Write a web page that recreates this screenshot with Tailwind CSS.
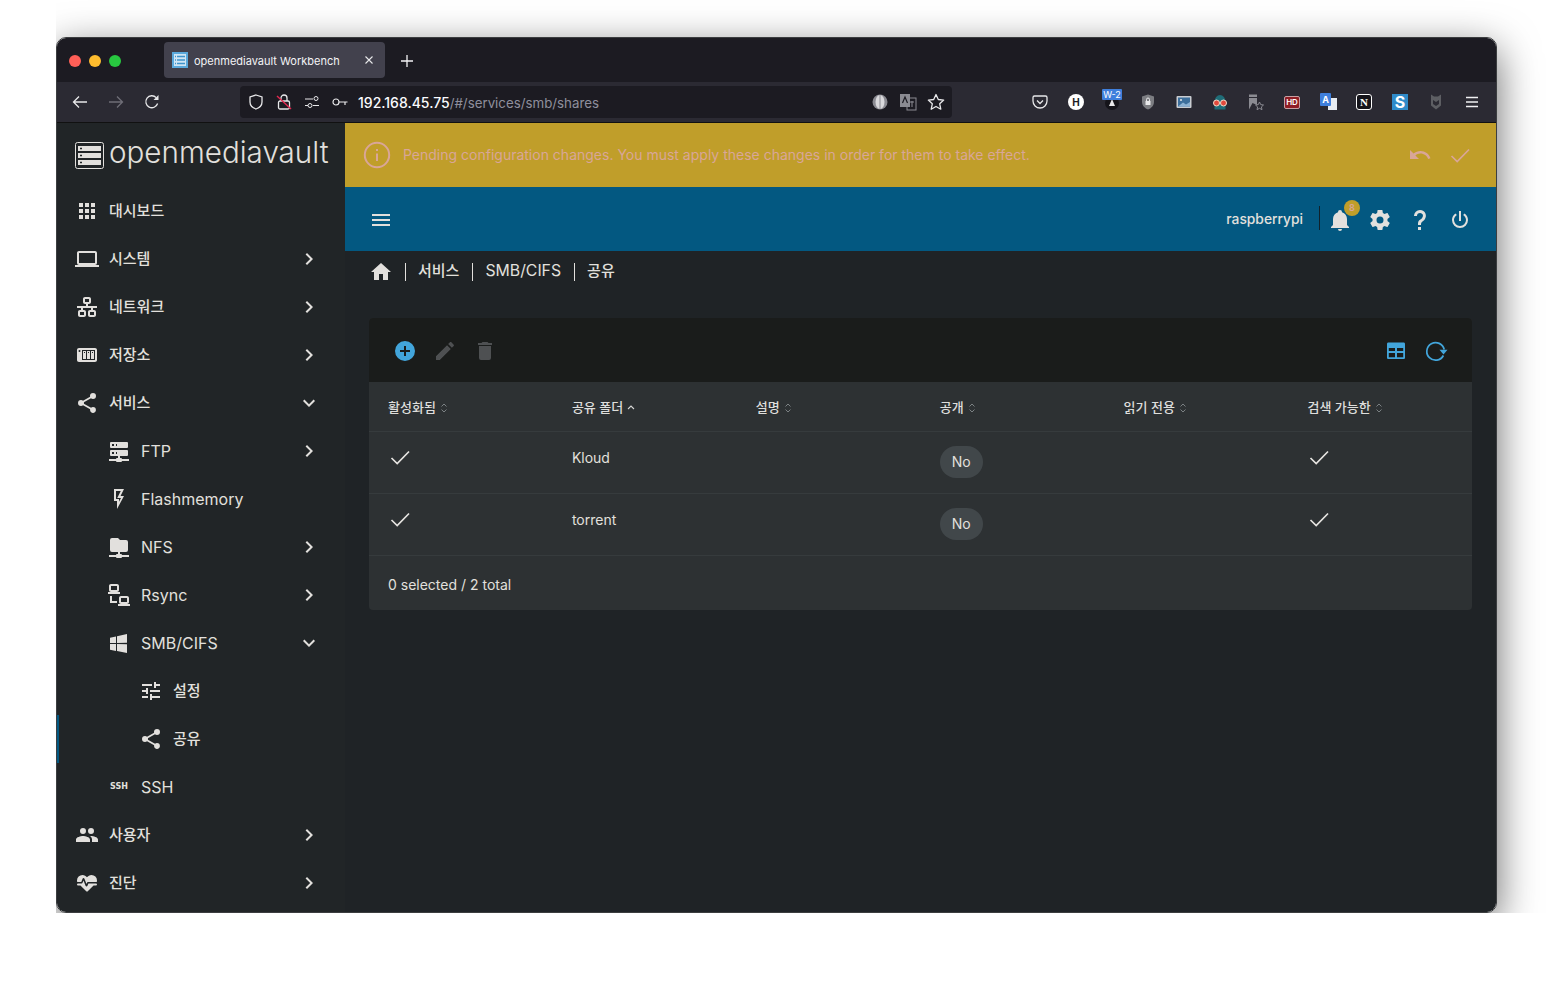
<!DOCTYPE html>
<html lang="ko">
<head>
  <meta charset="UTF-8" />
  <title>openmediavault Workbench</title>
  <script src="https://cdn.jsdelivr.net/npm/@tailwindcss/browser@4"></script>
</head>
<body class="bg-white font-['Inter','Noto_Sans_CJK_KR',sans-serif]">

  <!-- shared icons -->
  <svg class="hidden">
    <symbol id="chev-r" viewBox="0 0 24 24"><path d="M8.59,16.58L13.17,12L8.59,7.41L10,6L16,12L10,18L8.59,16.58Z"/></symbol>
    <symbol id="chev-d" viewBox="0 0 24 24"><path d="M7.41,8.58L12,13.17L16.59,8.58L18,10L12,16L6,10L7.41,8.58Z"/></symbol>
    <symbol id="share" viewBox="0 0 24 24"><path d="M18,16.08C17.24,16.08 16.56,16.38 16.04,16.85L8.91,12.7C8.96,12.47 9,12.24 9,12C9,11.76 8.96,11.53 8.91,11.3L15.96,7.19C16.5,7.69 17.21,8 18,8A3,3 0 0,0 21,5A3,3 0 0,0 18,2A3,3 0 0,0 15,5C15,5.24 15.04,5.47 15.09,5.7L8.04,9.81C7.5,9.31 6.79,9 6,9A3,3 0 0,0 3,12A3,3 0 0,0 6,15C6.79,15 7.5,14.69 8.04,14.19L15.16,18.34C15.11,18.55 15.08,18.77 15.08,19C15.08,20.61 16.39,21.91 18,21.91C19.61,21.91 20.92,20.61 20.92,19A2.92,2.92 0 0,0 18,16.08Z"/></symbol>
    <symbol id="sort" viewBox="0 0 8 12"><path d="M1.5 4.5L4 2L6.5 4.5M1.5 7.5L4 10L6.5 7.5" fill="none" stroke="#7b8183" stroke-width="1"/></symbol>
    <symbol id="tick" viewBox="0 0 24 24"><path d="M3.5 13L9.2 18.5L21 6.5" fill="none" stroke="#e6e4e1" stroke-width="1.7"/></symbol>
  </svg>

  <div class="ml-[56px] h-[913px] overflow-hidden pt-[37px]">
    <div class="w-[1441px] h-[876px] rounded-[10px] overflow-hidden border border-[#3c3e40] shadow-[0_12px_40px_rgba(0,0,0,0.6)] flex flex-col">

      <!-- BROWSER TABS -->
      <div class="h-[44px] bg-[#1c1b22] flex shrink-0">
        <div class="w-[107px] flex items-center gap-2 pl-3 pt-[1px]">
          <span class="w-3 h-3 rounded-full bg-[#ff5f57]"></span>
          <span class="w-3 h-3 rounded-full bg-[#febc2e]"></span>
          <span class="w-3 h-3 rounded-full bg-[#28c840]"></span>
        </div>
        <div class="mt-[4px] w-[221px] h-[36px] bg-[#42414d] rounded-[4px] flex items-center pl-[8px] text-[#f4f4f6]">
          <svg class="w-4 h-4 shrink-0" viewBox="0 0 16 16"><rect width="16" height="16" fill="#5aa9dc"/><rect x="2" y="2" width="12" height="12" fill="#cfe6f5"/><path d="M5 4.5H13M5 8H13M5 11.5H13" stroke="#3f94cc" stroke-width="1.6"/><path d="M3 4.5H4M3 8H4M3 11.5H4" stroke="#3f94cc" stroke-width="1.6"/></svg>
          <span class="ml-[6px] mt-[2px] text-[11px] whitespace-nowrap">openmediavault Workbench</span>
          <svg class="w-3 h-3 ml-auto mr-[10px]" viewBox="0 0 12 12"><path d="M2.5 2.5L9.5 9.5M9.5 2.5L2.5 9.5" stroke="#e8e8ea" stroke-width="1.1"/></svg>
        </div>
        <svg class="w-3 h-3 ml-[16px] mt-[17px]" viewBox="0 0 12 12"><path d="M6 0V12M0 6H12" stroke="#f4f4f6" stroke-width="1.3"/></svg>
      </div>

      <!-- BROWSER TOOLBAR -->
      <div class="h-[41px] bg-[#2b2a33] flex items-center pl-[5px] shrink-0 border-b border-[#111]">
        <div class="w-9 flex justify-center">
          <svg class="w-4 h-4" viewBox="0 0 16 16"><path d="M15 8H1.5M7 2.5L1.5 8L7 13.5" fill="none" stroke="#e8e8ea" stroke-width="1.3"/></svg>
        </div>
        <div class="w-9 flex justify-center">
          <svg class="w-4 h-4" viewBox="0 0 16 16"><path d="M1 8H14.5M9 2.5L14.5 8L9 13.5" fill="none" stroke="#6f6e77" stroke-width="1.3"/></svg>
        </div>
        <div class="w-9 flex justify-center">
          <svg class="w-4 h-4" viewBox="0 0 16 16"><path d="M13.6 9.5A6 6 0 1 1 12.2 3.6" fill="none" stroke="#e8e8ea" stroke-width="1.3"/><path d="M14.5 1V6H9.5Z" fill="#e8e8ea"/></svg>
        </div>

        <div class="ml-[70px] w-[712px] h-[32px] bg-[#1c1b22] rounded-[4px] flex items-center text-[14px] relative">
          <svg class="w-4 h-4 ml-[8px]" viewBox="0 0 16 16"><path d="M8 1L14 3V8C14 11.5 11 14 8 15C5 14 2 11.5 2 8V3Z" fill="none" stroke="#e8e8ea" stroke-width="1.3"/></svg>
          <svg class="w-4 h-4 ml-[12px]" viewBox="0 0 16 16"><rect x="2.5" y="7" width="11" height="8" rx="1.5" fill="none" stroke="#e8e8ea" stroke-width="1.3"/><path d="M5 7V4A3 3 0 0 1 11 4V7" fill="none" stroke="#e8e8ea" stroke-width="1.3"/><path d="M1 2L15 15" stroke="#e22850" stroke-width="1.4"/></svg>
          <svg class="w-4 h-4 ml-[12px]" viewBox="0 0 16 16"><path d="M1 5H9M1 11.5H4M9 11.5H15" stroke="#e8e8ea" stroke-width="1.2"/><circle cx="12" cy="4.5" r="2" fill="none" stroke="#e8e8ea"/><circle cx="6" cy="11.5" r="2" fill="none" stroke="#e8e8ea"/></svg>
          <svg class="w-4 h-4 ml-[12px]" viewBox="0 0 16 16"><circle cx="4" cy="8" r="3" fill="none" stroke="#e8e8ea" stroke-width="1.2"/><path d="M7 8H15.5M13 8V11" stroke="#e8e8ea" stroke-width="1.2"/></svg>
          <span class="ml-[10px] mt-[1px] whitespace-nowrap font-medium text-[#fbfbfe]">192.168.45.75<span class="font-normal text-[13.3px] text-[#8f8f9d]">/#/services/smb/shares</span></span>
          <div class="ml-auto flex items-center">
            <svg class="w-4 h-4" viewBox="0 0 16 16"><circle cx="8" cy="8" r="7.5" fill="#8b8b92"/><ellipse cx="8" cy="8" rx="4.5" ry="7" fill="#d9d9dc"/><path d="M8 1V15" stroke="#8b8b92"/></svg>
            <svg class="w-[18px] h-[18px] ml-[11px]" viewBox="0 0 18 18"><rect x="1" y="1" width="10" height="13" fill="#8b8b92"/><rect x="8" y="5" width="9" height="12" fill="none" stroke="#8b8b92"/><path d="M3.5 10L6 4L8.5 10" fill="none" stroke="#1c1b22" stroke-width="1.2"/><path d="M11 9H15M13 8V14" stroke="#8b8b92"/></svg>
            <svg class="w-[18px] h-[18px] ml-[10px] mr-[7px]" viewBox="0 0 18 18"><path d="M9 1.5L11.3 6.5L16.7 7.1L12.7 10.8L13.8 16.2L9 13.5L4.2 16.2L5.3 10.8L1.3 7.1L6.7 6.5Z" fill="none" stroke="#e8e8ea" stroke-width="1.3" stroke-linejoin="round"/></svg>
          </div>
        </div>

        <!-- extensions -->
        <div class="ml-[70px] flex">
          <div class="w-9 flex justify-center"><svg class="w-4 h-4" viewBox="0 0 16 16"><path d="M2.5 2H13.5A1.5 1.5 0 0 1 15 3.5V7A7 7 0 0 1 1 7V3.5A1.5 1.5 0 0 1 2.5 2Z" fill="none" stroke="#e8e8ea" stroke-width="1.3"/><path d="M5 6.5L8 9.5L11 6.5" fill="none" stroke="#e8e8ea" stroke-width="1.3"/></svg></div>
          <div class="w-9 flex justify-center"><span class="w-4 h-4 rounded-full bg-white text-[#1c1b22] text-[10px] font-bold flex items-center justify-center">H</span></div>
          <div class="w-9 flex justify-center relative h-4">
            <svg class="w-4 h-4" viewBox="0 0 16 16"><circle cx="8" cy="9" r="7" fill="#15141a"/><path d="M8 5L11 12H5Z" fill="#e8e8ea"/></svg>
            <span class="absolute left-[8px] -top-[5px] w-[20px] h-[11px] bg-[#3f7fdc] rounded-[1px] text-[9px] leading-[11px] text-center text-white">W-2</span>
          </div>
          <div class="w-9 flex justify-center"><svg class="w-4 h-4" viewBox="0 0 16 16"><path d="M8 0.5L14 2.5V8C14 11.5 11 14.5 8 15.5C5 14.5 2 11.5 2 8V2.5Z" fill="#7c7d82"/><rect x="5.5" y="7" width="5" height="4" fill="#e8e8ea"/><path d="M6.5 7V5.5A1.5 1.5 0 0 1 9.5 5.5V7" fill="none" stroke="#e8e8ea"/></svg></div>
          <div class="w-9 flex justify-center"><svg class="w-4 h-4" viewBox="0 0 16 16"><rect x="0.5" y="2" width="15" height="12" rx="1" fill="#c9ccd1"/><rect x="2" y="3.5" width="12" height="9" fill="#3d6f9c"/><path d="M2 12.5L7 8.5L10 10.5L14 8V12.5Z" fill="#8db2d3"/><circle cx="5" cy="6" r="1" fill="#e8e8ea"/></svg></div>
          <div class="w-9 flex justify-center"><svg class="w-4 h-4" viewBox="0 0 16 16"><path d="M2.5 8A5.5 7 0 0 1 13.5 8V15.5H2.5Z" fill="#1f6d78"/><circle cx="4.5" cy="9" r="3" fill="#e24a3c" stroke="#f2dcc8"/><circle cx="11.5" cy="9" r="3" fill="#e24a3c" stroke="#f2dcc8"/></svg></div>
          <div class="w-9 flex justify-center"><svg class="w-4 h-4" viewBox="0 0 16 16"><path d="M1 0.5H9V11L4.5 9L1 15.5Z" fill="#8b8b92"/><path d="M1 3.5H9" stroke="#2b2a33"/><path d="M11.5 8L12.7 10.6L15.5 11L13.4 12.9L14 15.7L11.5 14.3L9 15.7L9.6 12.9L7.5 11L10.3 10.6Z" fill="none" stroke="#8b8b92"/></svg></div>
          <div class="w-9 flex justify-center items-center"><span class="w-4 h-[13px] rounded-[2px] bg-[#8f1d24] border border-[#c7a0a3] text-[8px] leading-[11px] text-center font-semibold text-white">HD</span></div>
          <div class="w-9 flex justify-center relative h-4">
            <span class="absolute left-[18px] top-[4px] w-[9px] h-[12px] bg-[#e8ecf2]"></span>
            <span class="absolute left-[10px] -top-[1px] w-[11px] h-[13px] bg-[#3f7fdc] rounded-[1px] text-[9px] leading-[13px] text-center font-bold text-white">A</span>
          </div>
          <div class="w-9 flex justify-center"><span class="w-4 h-4 rounded-[3px] bg-[#15141a] border border-white text-white text-[11px] font-bold leading-[14px] text-center font-['Liberation_Serif',serif]">N</span></div>
          <div class="w-9 flex justify-center"><span class="w-4 h-4 bg-[#2f8bc9] text-white text-[16px] font-bold leading-4 text-center">S</span></div>
          <div class="w-9 flex justify-center"><svg class="w-4 h-4" viewBox="0 0 16 16"><path d="M3 0.5L6 2.5H10L13 0.5V11.5L8 15.5L3 11.5Z" fill="#5d5e63"/><path d="M5 6L8 8L11 6V10L8 12L5 10Z" fill="#2b2a33"/></svg></div>
          <div class="w-9 flex justify-center"><svg class="w-4 h-4" viewBox="0 0 16 16"><path d="M2 3.5H14M2 8H14M2 12.5H14" stroke="#f0f0f2" stroke-width="1.4"/></svg></div>
        </div>
      </div>

      <!-- APP -->
      <div class="flex flex-1 min-h-0">

        <!-- SIDEBAR -->
        <aside class="w-[288px] shrink-0 bg-[#212527] text-[#e2e0dd]">
          <div class="h-[64px] flex items-center pl-[18px]">
            <svg class="w-[29px] h-[27px] shrink-0" viewBox="0 0 29 27"><rect x="0.5" y="0.5" width="28" height="26" rx="2" fill="none" stroke="#e2e0dd"/><rect x="3" y="4" width="23" height="5" fill="#e2e0dd"/><rect x="3" y="11" width="23" height="5" fill="#e2e0dd"/><rect x="3" y="18" width="23" height="5" fill="#e2e0dd"/><path d="M5 6.5H7M5 13.5H7M5 20.5H7" stroke="#212527" stroke-width="1.4"/></svg>
            <span class="ml-[5px] mb-[4px] text-[29.6px] leading-none font-light whitespace-nowrap">openmediavault</span>
          </div>

          <nav class="text-[15px]">
            <div class="h-12 flex items-center pl-[18px]">
              <svg class="w-6 h-6 fill-current" viewBox="0 0 24 24"><path d="M16,20H20V16H16M16,14H20V10H16M10,8H14V4H10M16,8H20V4H16M10,14H14V10H10M4,14H8V10H4M4,20H8V16H4M10,20H14V16H10M4,8H8V4H4V8Z"/></svg>
              <span class="ml-[10px] font-medium">대시보드</span>
            </div>
            <div class="h-12 flex items-center pl-[18px]">
              <svg class="w-6 h-6 fill-current" viewBox="0 0 24 24"><path d="M4,6H20V16H4M20,18A2,2 0 0,0 22,16V6C22,4.89 21.1,4 20,4H4C2.89,4 2,4.89 2,6V16A2,2 0 0,0 4,18H0V20H24V18H20Z"/></svg>
              <span class="ml-[10px] font-medium">시스템</span>
              <svg class="w-6 h-6 fill-current ml-auto mr-[24px]"><use href="#chev-r"/></svg>
            </div>
            <div class="h-12 flex items-center pl-[18px]">
              <svg class="w-6 h-6 fill-current" viewBox="0 0 24 24"><path d="M10,2C8.89,2 8,2.89 8,4V7C8,8.11 8.89,9 10,9H11V11H2V13H6V15H5C3.89,15 3,15.89 3,17V20C3,21.11 3.89,22 5,22H9C10.11,22 11,21.11 11,20V17C11,15.89 10.11,15 9,15H8V13H16V15H15C13.89,15 13,15.89 13,17V20C13,21.11 13.89,22 15,22H19C20.11,22 21,21.11 21,20V17C21,15.89 20.11,15 19,15H18V13H22V11H13V9H14C15.11,9 16,8.11 16,7V4C16,2.89 15.11,2 14,2H10M10,4H14V7H10V4M5,17H9V20H5V17M15,17H19V20H15V17Z"/></svg>
              <span class="ml-[10px] font-medium">네트워크</span>
              <svg class="w-6 h-6 fill-current ml-auto mr-[24px]"><use href="#chev-r"/></svg>
            </div>
            <div class="h-12 flex items-center pl-[18px]">
              <svg class="w-6 h-6 fill-current" viewBox="0 0 24 24"><path d="M4,5C2.89,5 2,5.89 2,7V17C2,18.11 2.89,19 4,19H20C21.11,19 22,18.11 22,17V7C22,5.89 21.11,5 20,5H4M4.5,7A1,1 0 0,1 5.5,8A1,1 0 0,1 4.5,9A1,1 0 0,1 3.5,8A1,1 0 0,1 4.5,7M7,7H20V17H7V7M8,8V16H11V8H8M12,8V16H15V8H12M16,8V16H19V8H16M9,9H10V10H9V9M13,9H14V10H13V9M17,9H18V10H17V9Z"/></svg>
              <span class="ml-[10px] font-medium">저장소</span>
              <svg class="w-6 h-6 fill-current ml-auto mr-[24px]"><use href="#chev-r"/></svg>
            </div>
            <div class="h-12 flex items-center pl-[18px]">
              <svg class="w-6 h-6 fill-current"><use href="#share"/></svg>
              <span class="ml-[10px] font-medium">서비스</span>
              <svg class="w-6 h-6 fill-current ml-auto mr-[24px]"><use href="#chev-d"/></svg>
            </div>

            <div class="h-12 flex items-center pl-[50px] text-base">
              <svg class="w-6 h-6 fill-current" viewBox="0 0 24 24"><path d="M13,19H14A1,1 0 0,1 15,20H22V22H15A1,1 0 0,1 14,23H10A1,1 0 0,1 9,22H2V20H9A1,1 0 0,1 10,19H11V17H4A1,1 0 0,1 3,16V12A1,1 0 0,1 4,11H20A1,1 0 0,1 21,12V16A1,1 0 0,1 20,17H13V19M4,3H20A1,1 0 0,1 21,4V8A1,1 0 0,1 20,9H4A1,1 0 0,1 3,8V4A1,1 0 0,1 4,3M9,7H10V5H9V7M9,15H10V13H9V15M5,5V7H7V5H5M5,13V15H7V13H5Z"/></svg>
              <span class="ml-[10px]">FTP</span>
              <svg class="w-6 h-6 fill-current ml-auto mr-[24px]"><use href="#chev-r"/></svg>
            </div>
            <div class="h-12 flex items-center pl-[50px] text-base">
              <svg class="w-6 h-6 fill-current" viewBox="0 0 24 24"><path d="M7,2H17L13.5,9H17L10,22V14H7V2M9,4V12H12V14.66L14,11H10.24L13.76,4H9Z"/></svg>
              <span class="ml-[10px]">Flashmemory</span>
            </div>
            <div class="h-12 flex items-center pl-[50px] text-base">
              <svg class="w-6 h-6 fill-current" viewBox="0 0 24 24"><path d="M3,15V5A2,2 0 0,1 5,3H11L13,5H19A2,2 0 0,1 21,7V15A2,2 0 0,1 19,17H13V19H14A1,1 0 0,1 15,20H22V22H15A1,1 0 0,1 14,23H10A1,1 0 0,1 9,22H2V20H9A1,1 0 0,1 10,19H11V17H5A2,2 0 0,1 3,15Z"/></svg>
              <span class="ml-[10px]">NFS</span>
              <svg class="w-6 h-6 fill-current ml-auto mr-[24px]"><use href="#chev-r"/></svg>
            </div>
            <div class="h-12 flex items-center pl-[50px] text-base">
              <svg class="w-6 h-6 fill-current" viewBox="0 0 24 24"><path d="M4,1C2.89,1 2,1.89 2,3V7C2,8.11 2.89,9 4,9H1V11H13V9H10C11.11,9 12,8.11 12,7V3C12,1.89 11.11,1 10,1H4M4,3H10V7H4V3M3,13V18L3,20H10V18H5V13H3M14,13C12.89,13 12,13.89 12,15V19C12,20.11 12.89,21 14,21H11V23H23V21H20C21.11,21 22,20.11 22,19V15C22,13.89 21.11,13 20,13H14M14,15H20V19H14V15Z"/></svg>
              <span class="ml-[10px]">Rsync</span>
              <svg class="w-6 h-6 fill-current ml-auto mr-[24px]"><use href="#chev-r"/></svg>
            </div>
            <div class="h-12 flex items-center pl-[50px] text-base">
              <svg class="w-6 h-6 fill-current" viewBox="0 0 24 24"><path d="M3,12V6.75L9,5.43V11.91L3,12M20,3V11.75L10,11.9V5.21L20,3M3,13L9,13.09V19.9L3,18.75V13M20,13.25V22L10,20.09V13.1L20,13.25Z"/></svg>
              <span class="ml-[10px]">SMB/CIFS</span>
              <svg class="w-6 h-6 fill-current ml-auto mr-[24px]"><use href="#chev-d"/></svg>
            </div>

            <div class="h-12 flex items-center pl-[82px]">
              <svg class="w-6 h-6 fill-current" viewBox="0 0 24 24"><path d="M3,17V19H9V17H3M3,5V7H13V5H3M13,21V19H21V17H13V15H11V21H13M7,9V11H3V13H7V15H9V9H7M21,13V11H11V13H21M15,9H17V7H21V5H17V3H15V9Z"/></svg>
              <span class="ml-[10px] font-medium">설정</span>
            </div>
            <div class="h-12 flex items-center pl-[82px] border-l-2 border-[#035881]">
              <svg class="w-6 h-6 fill-current -ml-[2px]"><use href="#share"/></svg>
              <span class="ml-[10px] font-medium">공유</span>
            </div>
            <div class="h-12 flex items-center pl-[50px] text-base">
              <span class="w-6 text-center text-[8px] font-bold font-['DejaVu_Sans',sans-serif]">SSH</span>
              <span class="ml-[10px]">SSH</span>
            </div>

            <div class="h-12 flex items-center pl-[18px]">
              <svg class="w-6 h-6 fill-current" viewBox="0 0 24 24"><path d="M16,13C15.71,13 15.38,13 15.03,13.05C16.19,13.89 17,15 17,16.5V19H23V16.5C23,14.17 18.33,13 16,13M8,13C5.67,13 1,14.17 1,16.5V19H15V16.5C15,14.17 10.33,13 8,13M8,11A3,3 0 0,0 11,8A3,3 0 0,0 8,5A3,3 0 0,0 5,8A3,3 0 0,0 8,11M16,11A3,3 0 0,0 19,8A3,3 0 0,0 16,5A3,3 0 0,0 13,8A3,3 0 0,0 16,11Z"/></svg>
              <span class="ml-[10px] font-medium">사용자</span>
              <svg class="w-6 h-6 fill-current ml-auto mr-[24px]"><use href="#chev-r"/></svg>
            </div>
            <div class="h-12 flex items-center pl-[18px]">
              <svg class="w-6 h-6 fill-current" viewBox="0 0 24 24"><path d="M7.5,4A5.5,5.5 0 0,0 2,9.5C2,10 2.09,10.5 2.22,11H6.3L7.57,7.63C7.87,6.83 9.05,6.75 9.43,7.63L11.5,13L12.09,11.58C12.22,11.25 12.57,11 13,11H21.78C21.91,10.5 22,10 22,9.5A5.5,5.5 0 0,0 16.5,4C14.64,4 13,4.93 12,6.34C11,4.93 9.36,4 7.5,4M3,12.5A1,1 0 0,0 2,13.5A1,1 0 0,0 3,14.5H5.44L11,20C12,20.9 12,20.9 13,20L18.56,14.5H21A1,1 0 0,0 22,13.5A1,1 0 0,0 21,12.5H13.4L12.47,14.8C12.07,15.81 10.92,15.67 10.55,14.83L8.5,9.5L7.54,11.83C7.39,12.21 7.05,12.5 6.6,12.5H3Z"/></svg>
              <span class="ml-[10px] font-medium">진단</span>
              <svg class="w-6 h-6 fill-current ml-auto mr-[24px]"><use href="#chev-r"/></svg>
            </div>
          </nav>
        </aside>

        <!-- MAIN -->
        <main class="flex-1 min-w-0 bg-[#1f2326] text-[#e2e0dd]">

          <!-- pending banner -->
          <div class="h-[64px] bg-[#c09e2a] flex items-center pl-[18px] pr-[24px] text-[#d9a698]">
            <svg class="w-[28px] h-[28px]" viewBox="0 0 28 28"><circle cx="14" cy="14" r="12.2" fill="none" stroke="currentColor" stroke-width="2"/><path d="M14 12.5V20M14 8V10" stroke="currentColor" stroke-width="2"/></svg>
            <span class="ml-[12px] mb-[2px] text-[14px] whitespace-nowrap">Pending configuration changes. You must apply these changes in order for them to take effect.</span>
            <svg class="w-6 h-6 fill-current ml-auto" viewBox="0 0 24 24"><path d="M12.5,8C9.85,8 7.45,9 5.6,10.6L2,7V16H11L7.38,12.38C8.77,11.22 10.54,10.5 12.5,10.5C16.04,10.5 19.05,12.81 20.1,16L22.47,15.22C21.08,11.03 17.15,8 12.5,8Z"/></svg>
            <svg class="w-6 h-6 ml-4" viewBox="0 0 24 24"><path d="M3.5 13L9.2 18.5L21 6.5" fill="none" stroke="currentColor" stroke-width="1.7"/></svg>
          </div>

          <!-- top toolbar -->
          <div class="h-[64px] bg-[#035881] flex items-center pl-[24px] pr-[24px] pt-[2px]">
            <svg class="w-6 h-6 fill-current" viewBox="0 0 24 24"><path d="M3,6H21V8H3V6M3,11H21V13H3V11M3,16H21V18H3V16Z"/></svg>
            <span class="ml-auto mb-[2px] text-[13.8px] font-medium">raspberrypi</span>
            <span class="ml-[16px] mb-[4px] w-px h-6 bg-[#10222c]"></span>
            <div class="relative ml-[8px] w-6 h-6">
              <svg class="w-6 h-6 fill-current" viewBox="0 0 24 24"><path d="M21,19V20H3V19L5,17V11C5,7.9 7.03,5.17 10,4.29C10,4.19 10,4.1 10,4A2,2 0 0,1 12,2A2,2 0 0,1 14,4C14,4.1 14,4.19 14,4.29C16.97,5.17 19,7.9 19,11V17L21,19M14,21A2,2 0 0,1 12,23A2,2 0 0,1 10,21"/></svg>
              <span class="absolute -top-[8px] left-[16px] w-4 h-4 rounded-full bg-[#c09e2a] text-[#d9a698] text-[9px] font-semibold leading-4 text-center">8</span>
            </div>
            <svg class="ml-4 w-6 h-6 fill-current" viewBox="0 0 24 24"><path d="M12,15.5A3.5,3.5 0 0,1 8.5,12A3.5,3.5 0 0,1 12,8.5A3.5,3.5 0 0,1 15.5,12A3.5,3.5 0 0,1 12,15.5M19.43,12.97C19.47,12.65 19.5,12.33 19.5,12C19.5,11.67 19.47,11.34 19.43,11L21.54,9.37C21.73,9.22 21.78,8.95 21.66,8.73L19.66,5.27C19.54,5.05 19.27,4.96 19.05,5.05L16.56,6.05C16.04,5.66 15.5,5.32 14.87,5.07L14.5,2.42C14.46,2.18 14.25,2 14,2H10C9.75,2 9.54,2.18 9.5,2.42L9.13,5.07C8.5,5.32 7.96,5.66 7.44,6.05L4.95,5.05C4.73,4.96 4.46,5.05 4.34,5.27L2.34,8.73C2.21,8.95 2.27,9.22 2.46,9.37L4.57,11C4.53,11.34 4.5,11.67 4.5,12C4.5,12.33 4.53,12.65 4.57,12.97L2.46,14.63C2.27,14.78 2.21,15.05 2.34,15.27L4.34,18.73C4.46,18.95 4.73,19.03 4.95,18.95L7.44,17.94C7.96,18.34 8.5,18.68 9.13,18.93L9.5,21.58C9.54,21.82 9.75,22 10,22H14C14.25,22 14.46,21.82 14.5,21.58L14.87,18.93C15.5,18.67 16.04,18.34 16.56,17.94L19.05,18.95C19.27,19.03 19.54,18.95 19.66,18.73L21.66,15.27C21.78,15.05 21.73,14.78 21.54,14.63L19.43,12.97Z"/></svg>
            <svg class="ml-4 w-6 h-6 fill-current" viewBox="0 0 24 24"><path d="M10,19H13V22H10V19M12,2C17.35,2.22 19.68,7.62 16.5,11.67C15.67,12.67 14.33,13.33 13.67,14.17C13,15 13,16 13,17H10C10,15.33 10,13.92 10.67,12.92C11.33,11.92 12.67,11.33 13.5,10.67C15.92,8.43 15.32,5.26 12,5A3,3 0 0,0 9,8H6A6,6 0 0,1 12,2Z"/></svg>
            <svg class="ml-4 w-6 h-6 fill-current" viewBox="0 0 24 24"><path d="M16.56,5.44L15.11,6.89C16.84,7.94 18,9.83 18,12A6,6 0 0,1 12,18A6,6 0 0,1 6,12C6,9.83 7.16,7.94 8.88,6.88L7.44,5.44C5.36,6.88 4,9.28 4,12A8,8 0 0,0 12,20A8,8 0 0,0 20,12C20,9.28 18.64,6.88 16.56,5.44M13,3H11V13H13"/></svg>
          </div>

          <!-- breadcrumb -->
          <div class="h-[42px] flex items-center pl-[24px] text-[15px]">
            <svg class="w-6 h-6 fill-current" viewBox="0 0 24 24"><path d="M10,20V14H14V20H19V12H22L12,3L2,12H5V20H10Z"/></svg>
            <span class="ml-[12px] w-px h-[18px] bg-[#e2e0dd]"></span>
            <span class="ml-[12px] mb-[2px] font-medium">서비스</span>
            <span class="ml-[13px] w-px h-[18px] bg-[#e2e0dd]"></span>
            <span class="ml-[12px] mb-[2px] text-[15.8px]">SMB/CIFS</span>
            <span class="ml-[13px] w-px h-[18px] bg-[#e2e0dd]"></span>
            <span class="ml-[12px] mb-[2px] font-medium">공유</span>
          </div>

          <!-- datatable card -->
          <div class="mt-[25px] mx-[24px] rounded-[4px] overflow-hidden bg-[#2d3133]">
            <div class="h-[64px] bg-[#1a1c1b] flex items-center pl-[24px] pr-[24px] pt-[2px]">
              <svg class="w-6 h-6 fill-[#42a5db]" viewBox="0 0 24 24"><path d="M17,13H13V17H11V13H7V11H11V7H13V11H17M12,2A10,10 0 0,0 2,12A10,10 0 0,0 12,22A10,10 0 0,0 22,12A10,10 0 0,0 12,2Z"/></svg>
              <svg class="ml-4 w-6 h-6 fill-[#4e5052]" viewBox="0 0 24 24"><path d="M20.71,7.04C21.1,6.65 21.1,6 20.71,5.63L18.37,3.29C18,2.9 17.35,2.9 16.96,3.29L15.12,5.12L18.87,8.87M3,17.25V21H6.75L17.81,9.93L14.06,6.18L3,17.25Z"/></svg>
              <svg class="ml-4 w-6 h-6 fill-[#4e5052]" viewBox="0 0 24 24"><path d="M19,4H15.5L14.5,3H9.5L8.5,4H5V6H19M6,19A2,2 0 0,0 8,21H16A2,2 0 0,0 18,19V7H6V19Z"/></svg>
              <svg class="ml-auto w-6 h-6" viewBox="0 0 24 24"><path d="M4 3.5H20A1.5 1.5 0 0 1 21 5V19A1.5 1.5 0 0 1 20 20H4A1.5 1.5 0 0 1 3 19V5A1.5 1.5 0 0 1 4 3.5Z" fill="#42a5db"/><path d="M4.8 9H11V12H4.8ZM13 9H19.2V12H13ZM4.8 14H11V18.2H4.8ZM13 14H19.2V18.2H13Z" fill="#1a1c1b"/></svg>
              <svg class="ml-4 w-6 h-6" viewBox="0 0 24 24"><path d="M20.2 10.5A8.8 8.8 0 1 0 19.4 16.5" fill="none" stroke="#42a5db" stroke-width="1.7"/><path d="M15.5 10.8H23.5L19.5 15.5Z" fill="#42a5db"/></svg>
            </div>

            <div class="grid grid-cols-[repeat(6,183.9px)] pl-[19px] h-[50px] items-center border-b border-[#363b3d] text-[13px] font-medium text-[#dededc]">
              <div class="flex items-center gap-[4px] pt-[2px]">활성화됨<svg class="w-2 h-3"><use href="#sort"/></svg></div>
              <div class="flex items-center gap-[4px] pt-[2px]">공유 폴더<svg class="w-2 h-3" viewBox="0 0 8 12"><path d="M1 7L4 4L7 7" fill="none" stroke="#d6d6d4" stroke-width="1.1"/></svg></div>
              <div class="flex items-center gap-[4px] pt-[2px]">설명<svg class="w-2 h-3"><use href="#sort"/></svg></div>
              <div class="flex items-center gap-[4px] pt-[2px]">공개<svg class="w-2 h-3"><use href="#sort"/></svg></div>
              <div class="flex items-center gap-[4px] pt-[2px]">읽기 전용<svg class="w-2 h-3"><use href="#sort"/></svg></div>
              <div class="flex items-center gap-[4px] pt-[2px]">검색 가능한<svg class="w-2 h-3"><use href="#sort"/></svg></div>
            </div>

            <div class="grid grid-cols-[repeat(6,183.9px)] pl-[19px] h-[62px] border-b border-[#363b3d] text-[14px]">
              <div class="pt-[13px]"><svg class="w-6 h-6"><use href="#tick"/></svg></div>
              <div class="pt-[15px] leading-[21px]">Kloud</div>
              <div></div>
              <div class="pt-[14px]"><span class="inline-block w-[43px] h-[32px] rounded-2xl bg-[#41474a] text-center leading-[32px]">No</span></div>
              <div></div>
              <div class="pt-[13px]"><svg class="w-6 h-6"><use href="#tick"/></svg></div>
            </div>
            <div class="grid grid-cols-[repeat(6,183.9px)] pl-[19px] h-[62px] border-b border-[#363b3d] text-[14px]">
              <div class="pt-[13px]"><svg class="w-6 h-6"><use href="#tick"/></svg></div>
              <div class="pt-[15px] leading-[21px]">torrent</div>
              <div></div>
              <div class="pt-[14px]"><span class="inline-block w-[43px] h-[32px] rounded-2xl bg-[#41474a] text-center leading-[32px]">No</span></div>
              <div></div>
              <div class="pt-[13px]"><svg class="w-6 h-6"><use href="#tick"/></svg></div>
            </div>

            <div class="h-[54px] pl-[19px] pt-[18px] text-[14px] leading-[21px]">0 selected / 2 total</div>
          </div>
        </main>
      </div>
    </div>
  </div>
</body>
</html>
